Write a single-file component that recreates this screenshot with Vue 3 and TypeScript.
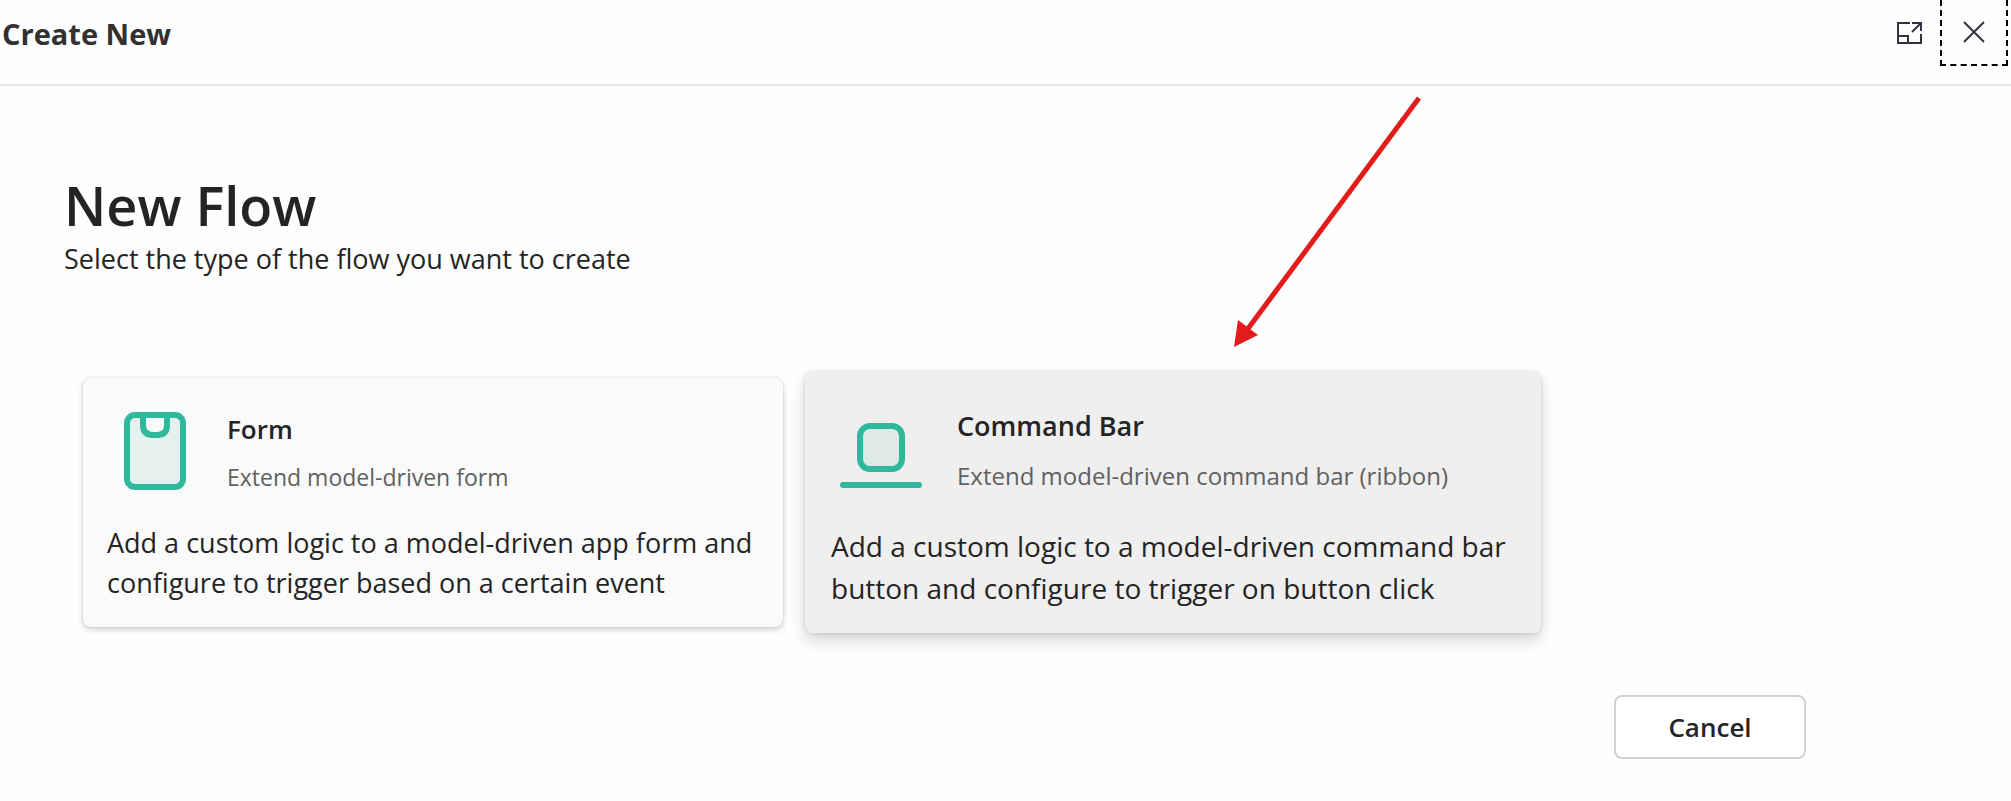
<script setup lang="ts">
interface FlowType {
  id: 'form' | 'command'
  title: string
  subtitle: string
  description: string
  active: boolean
}

const flowTypes: FlowType[] = [
  {
    id: 'form',
    title: 'Form',
    subtitle: 'Extend model-driven form',
    description:
      'Add a custom logic to a model-driven app form and configure to trigger based on a certain event',
    active: false,
  },
  {
    id: 'command',
    title: 'Command Bar',
    subtitle: 'Extend model-driven command bar (ribbon)',
    description:
      'Add a custom logic to a model-driven command bar button and configure to trigger on button click',
    active: true,
  },
]
</script>

<template>
  <div class="dialog" role="dialog" aria-labelledby="dialog-title">
    <header class="header">
      <h1 id="dialog-title" class="dialog-title">Create New</h1>
      <div class="actions">
        <button class="icon-button" type="button" aria-label="Expand">
          <svg width="26" height="26" viewBox="0 0 26 26" fill="none" stroke="#33333f" stroke-width="2">
            <path d="M14 3H2V23H25V14M2 16H12V23M16 3H25V11M25 3L16 12" />
          </svg>
        </button>
        <button class="icon-button focused" type="button" aria-label="Close">
          <svg width="26" height="26" viewBox="0 0 26 26" fill="none" stroke="#33333f" stroke-width="2">
            <path d="M3 3L23 23M23 3L3 23" />
          </svg>
        </button>
      </div>
    </header>

    <main class="content">
      <h2 class="heading">New Flow</h2>
      <p class="lead">Select the type of the flow you want to create</p>

      <div class="cards">
        <button
          v-for="flow in flowTypes"
          :key="flow.id"
          type="button"
          class="card"
          :class="{ active: flow.active }"
        >
          <span class="card-head">
            <svg v-if="flow.id === 'form'" class="card-icon" width="82" height="82" viewBox="0 0 82 82">
              <rect x="13" y="3" width="56" height="72" rx="8" fill="#e6f1ef" />
              <path d="M29 3V13Q29 23 39 23H43Q53 23 53 13V3Z" fill="#fafafa" />
              <rect x="13" y="3" width="56" height="72" rx="8" fill="none" stroke="#30b89c" stroke-width="6" />
              <path d="M29 3V13Q29 23 39 23H43Q53 23 53 13V3" fill="none" stroke="#30b89c" stroke-width="6" />
            </svg>
            <svg v-else class="card-icon" width="84" height="84" viewBox="0 0 84 84">
              <rect x="21" y="17" width="42" height="43" rx="10" fill="#deeae8" stroke="#30b89c" stroke-width="6" />
              <path d="M4 76H80" stroke="#30b89c" stroke-width="6" stroke-linecap="round" />
            </svg>
            <span class="card-titles">
              <span class="card-title">{{ flow.title }}</span>
              <span class="card-subtitle">{{ flow.subtitle }}</span>
            </span>
          </span>
          <span class="card-text">{{ flow.description }}</span>
        </button>
      </div>

      <footer class="footer">
        <button class="cancel" type="button">Cancel</button>
      </footer>
    </main>

    <svg class="pointer" width="192" height="256" viewBox="0 0 192 256" aria-hidden="true">
      <path d="M187 3L15 235" stroke="#e31b1b" stroke-width="5" />
      <path d="M2 252L6 225L26 240Z" fill="#e31b1b" />
    </svg>
  </div>
</template>

<style>
body {
  margin: 0;
  background: #fefefe;
}
</style>

<style scoped>
.dialog {
  position: relative;
  font-family: 'Open Sans', 'Noto Sans', sans-serif;
  color: #242424;
}
.header {
  display: flex;
  justify-content: space-between;
  height: 84px;
  border-bottom: 2px solid #e6e6e6;
}
.dialog-title {
  margin: 0;
  padding-left: 2px;
  font-size: 29px;
  line-height: 68px;
  font-weight: 700;
  color: #323130;
}
.actions {
  display: flex;
  padding-right: 3px;
}
button {
  font-family: inherit;
  color: inherit;
}
.icon-button {
  display: flex;
  align-items: center;
  justify-content: center;
  width: 62px;
  height: 66px;
  padding: 0;
  border: 0;
  background: transparent;
}
.icon-button.focused {
  width: 68px;
  border: 2px dashed #000;
  border-top: 0;
}
.content {
  padding: 83px 205px 40px 64px;
}
.heading {
  margin: 0;
  font-size: 54px;
  line-height: 72px;
  font-weight: 600;
}
.lead {
  margin: 0;
  font-size: 27px;
  line-height: 36px;
}
.cards {
  display: grid;
  grid-template-columns: 700fr 736fr;
  gap: 22px;
  align-items: center;
  max-width: 1458px;
  margin: 95px 0 0 19px;
}
.card {
  display: flex;
  flex-direction: column;
  gap: 26px;
  padding: 31px 24px 24px;
  border: 0;
  border-radius: 8px;
  background: #fafafa;
  box-shadow: 0 0 3px rgba(0, 0, 0, 0.14), 0 3px 6px rgba(0, 0, 0, 0.16);
  text-align: left;
  font-size: 27px;
  line-height: 40px;
}
.card.active {
  gap: 28px;
  padding: 33px 26px 24px;
  background: #efefef;
  box-shadow: 0 0 4px rgba(0, 0, 0, 0.14), 0 8px 16px rgba(0, 0, 0, 0.16);
  font-size: 28px;
  line-height: 42px;
}
.card-head {
  display: flex;
  align-items: center;
  gap: 31px;
  padding-left: 7px;
}
.card.active .card-head {
  padding-left: 8px;
  gap: 34px;
}
.card-icon {
  flex: none;
}
.card-titles {
  display: flex;
  flex-direction: column;
  gap: 8px;
}
.card-title {
  font-size: 26px;
  font-weight: 600;
}
.card.active .card-title {
  font-size: 27px;
}
.card-subtitle {
  font-size: 23px;
  color: #616161;
}
.card.active .card-subtitle {
  font-size: 24px;
}
.footer {
  display: flex;
  justify-content: flex-end;
  padding-top: 62px;
}
.cancel {
  width: 192px;
  height: 64px;
  padding: 0;
  border: 2px solid #d1d1d1;
  border-radius: 8px;
  background: #fff;
  font-size: 26px;
  font-weight: 600;
}
.pointer {
  position: absolute;
  left: 1232px;
  top: 95px;
}
</style>
